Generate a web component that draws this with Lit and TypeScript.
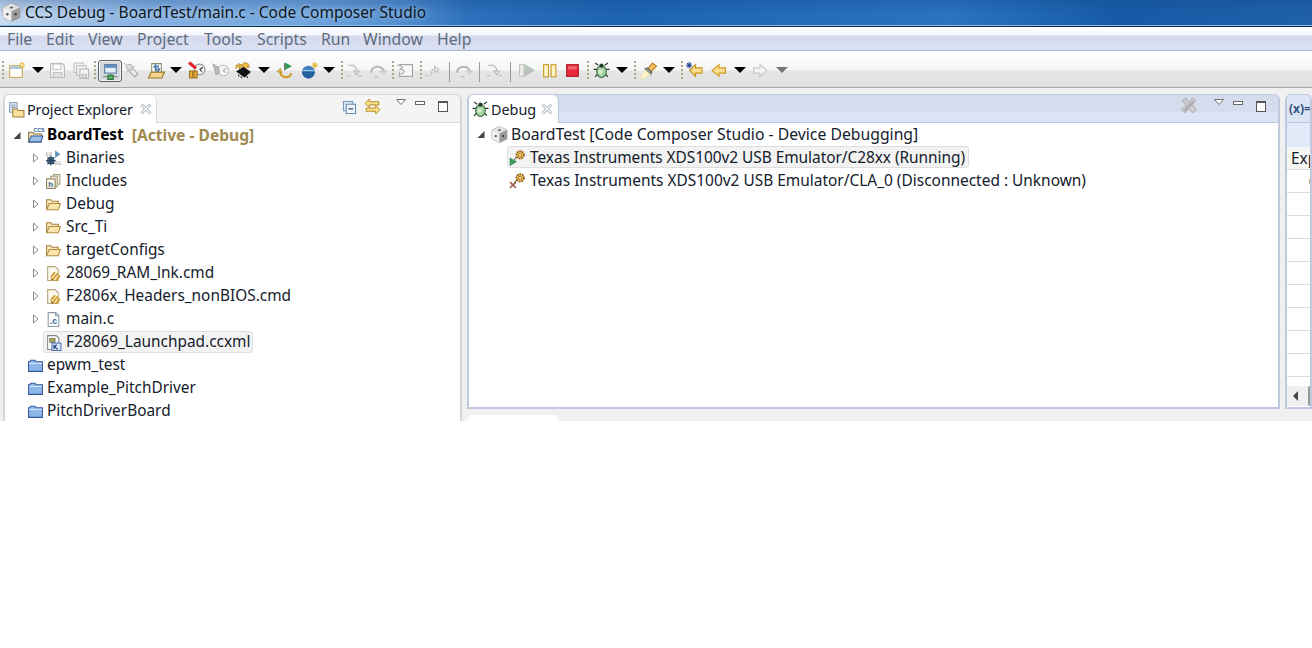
import { LitElement, html, css, svg } from "lit";
import { customElement } from "lit/decorators.js";

const S = (c: any, size = 17) => html`<svg width=${size} height=${size} viewBox="0 0 16 16" fill="none">${c}</svg>`;

const cube = svg`<path d="M8 .5 15 3.800v8.400L8 15.500 1 12.200V3.800z" fill="#c9c9c9" stroke="#8a8a8a" stroke-width=".7"/><path d="M1 3.800 8 7l7-3.200L8 .5z" fill="#e4e4e4"/><path d="M8 7v8.500L1 12.200V3.800z" fill="#f0f0f0"/><path d="M8 7v8.500l7-3.300V3.800z" fill="#9c9c9c"/><circle cx="4.500" cy="9.500" r="1.100" fill="#555"/><circle cx="11.500" cy="9.500" r="1.100" fill="#444"/><ellipse cx="8" cy="3.800" rx="1.600" ry=".8" fill="#666"/>`;
const folder = svg`<path d="M1.500 13V3.500h4l1 1.500h6v2" fill="#f8e8bf" stroke="#a8803c"/><path d="M1.500 13 4 7h10.500l-2 6z" fill="#fbe6b0" stroke="#b58b3c"/>`;
const blueFolder = svg`<path d="M1.500 13.500V4.500h1l1-1.500h4l1 1.500h6v9z" fill="#8fb8ea" stroke="#33589e"/><path d="M2 6h12" stroke="#dbe8fa"/>`;
const ccsFolder = svg`<path d="M1.500 14V5h4l1 1.500h7V14z" fill="#f3e3b8" stroke="#8a7240"/><path d="M1.500 14 4 8.500h11l-2 5.500z" fill="#9dc0ea" stroke="#2f5fa3"/><text x="6" y="4.800" font-size="5" font-family="Liberation Sans" font-weight="700" fill="#2f5fa3">CCS</text>`;
const linkedFile = svg`<path d="M2.500 1.500h7l3 3v10h-10z" fill="#fbf8ee" stroke="#b9a878"/><path d="M9.500 7 5.500 11.500M12 8 7 14M14 10l-4 5" stroke="#d09a24" stroke-width="1.700"/><path d="M5.500 12.500l2 2" stroke="#8a6412"/>`;
const cfile = svg`<path d="M3 1.500h7l3 3v10H3z" fill="#fff" stroke="#8e9aa8"/><path d="M10 1.500v3h3" stroke="#8e9aa8"/><text x="4.500" y="12" font-size="8" font-family="Liberation Sans" font-weight="700" fill="#2f5f9f">.c</text>`;
const ccxml = svg`<path d="M2.500 1.500h8l2.500 2.500v10.500H2.500z" fill="#fff" stroke="#7d8794"/><rect x="4.500" y="4" width="5" height="4" fill="#a8a060" stroke="#6d6840" stroke-width=".6"/><rect x="6.500" y="8.500" width="8.500" height="7" fill="#d7e6f7" stroke="#33589e" stroke-width=".8"/><path d="M8.500 10v4M11 10l-2 2 3 2.500" stroke="#1a3f80" stroke-width="1.100"/>`;
const binaries = svg`<text x="0" y="6" font-size="5.500" font-family="Liberation Mono" fill="#9a9a9a">10</text><text x="9" y="14" font-size="5.500" font-family="Liberation Mono" fill="#9a9a9a">01</text><path d="M9.500.5l5 3.500-5 3.500z" fill="#5d93bd"/><circle cx="5.500" cy="10" r="3" fill="#7ea2c0" stroke="#24445f"/><path d="M5.500 5.500v9M1 10h9M2.300 6.800l6.400 6.400M8.700 6.800l-6.400 6.400" stroke="#24445f"/>`;
const includes = svg`<rect x="8" y="1.500" width="6" height="9" fill="#f6f0df" stroke="#a39a80"/><rect x="5.500" y="3" width="6" height="10" fill="#f6f0df" stroke="#a39a80"/><rect x="1.500" y="5.500" width="8" height="9" fill="#fff8e6" stroke="#8a7e5e"/><text x="3" y="13" font-size="7.500" font-family="Liberation Sans" font-weight="700" fill="#2f5f9f">h</text>`;
const bug = svg`<path d="M5 3 2 1M4 7H.5M4.500 11 2 14M11 3l3-2M12 7h3.500M11.500 11l2.500 3" stroke="#26402c" stroke-width="1.100"/><ellipse cx="8" cy="9" rx="4.500" ry="5.500" fill="#a9d3a0" stroke="#2f6640"/><circle cx="7" cy="9" r="2" fill="#d9eccf"/><circle cx="8" cy="3.500" r="2" fill="#20402a"/>`;
const gear = svg`<circle cx="10.500" cy="5.500" r="3.600" fill="#eab84a" stroke="#8a5a14" stroke-width="1.400" stroke-dasharray="1.800 .8"/><circle cx="10.500" cy="5.500" r="1.500" fill="#fff1c0" stroke="#8a5a14" stroke-width=".7"/>`;
const running = svg`${gear}<path d="M7.500 7.500 5 10" stroke="#6a5a3a"/><path d="M1 8.500 7 12 1 15.500z" fill="#3f9d5a" stroke="#2c7a42" stroke-width=".6"/>`;
const disco = svg`${gear}<path d="M7.500 7.500 5 10" stroke="#6a5a3a"/><path d="M1 9.500l5.500 5.500M6.500 9.500 1 15" stroke="#a0604c" stroke-width="1.500"/>`;
const newWiz = svg`<rect x="1.500" y="3.500" width="12" height="11" fill="#fff" stroke="#c7a94f"/><rect x="2" y="4" width="11" height="2.500" fill="#a8c4e4"/><path d="M13 0v6M10 3h6M11 1l4 4M15 1l-4 4" stroke="#e8b93a"/><circle cx="13" cy="3" r="1" fill="#fff"/>`;
const save = svg`<path d="M1.500 1.500h11l2 2v11h-13z" fill="#f4f4f4" stroke="#b5b5b5"/><rect x="4" y="2" width="7" height="5" fill="#fff" stroke="#c8c8c8"/><rect x="4" y="10" width="8" height="4.500" fill="#e2e2e2" stroke="#bdbdbd"/>`;
const saveAll = svg`<rect x="1" y="1" width="9" height="9" fill="#f4f4f4" stroke="#c2c2c2"/><rect x="3.500" y="3.500" width="9" height="9" fill="#f4f4f4" stroke="#bbb"/><path d="M6.500 6.500h8v9h-8z" fill="#f4f4f4" stroke="#b2b2b2"/><rect x="8.500" y="11.500" width="4" height="3.500" fill="#ddd" stroke="#bbb"/>`;
const connect = svg`<rect x="2.500" y="1.500" width="11" height="8" fill="#e6eef8" stroke="#5876a0"/><rect x="3" y="2" width="10" height="2.500" fill="#5a88c0"/><path d="M8 10v2M1 13h14" stroke="#6a8a70"/><rect x="5.500" y="11.500" width="5" height="4" fill="#57b06a" stroke="#2a6a3a"/>`;
const plug = svg`<path d="M9 6l5 5-3 3-5-5z" fill="#e8e8e8" stroke="#aaa"/><circle cx="6" cy="5" r="2.800" fill="#ddd" stroke="#aaa" stroke-dasharray="1.500 .7"/><path d="M1 1l2 2M11 4l-2 1M3 10l2-2" stroke="#bbb"/>`;
const load = svg`<path d="M3.500 11V1.500h9V11" fill="#fff" stroke="#8b8b70"/><path d="M6.800 9V5H5.300l1.700-3 1.500 3H7.800z" fill="#3f7cc0" stroke="#2a5a9a" stroke-width=".5"/><path d="M9.500 2.500v4H11l-1.800 3-1.400-3" stroke="#2a5a9a"/><path d="M.5 15 3 9.500h12.500L13 15z" fill="#f2d48f" stroke="#9a7426"/>`;
const pinClock = svg`<circle cx="11" cy="7" r="5" fill="#f6f6f6" stroke="#8f8f8f"/><path d="M11 7l3-2M11 7l2 2" stroke="#333"/><rect x="1.500" y="8.500" width="3" height="6.500" fill="#efb13a" stroke="#9a6a10"/><rect x="5.500" y="8.500" width="3" height="6.500" fill="#efb13a" stroke="#9a6a10"/><path d="M1 .5 7.500 6" stroke="#e0202a" stroke-width="3"/>`;
const greyClock = svg`<circle cx="10.500" cy="8" r="5" fill="#f5f5f5" stroke="#bcbcbc"/><path d="M10.500 8l3-2M10.500 8l2 2" stroke="#aaa"/><path d="M1 2l5 3 1 5-3 2z" fill="#bdbdbd" stroke="#aaa"/>`;
const chip = svg`<path d="M1 9 8 4.500l7 5-6 5z" fill="#111"/><path d="M3 12l1 1.500M5.500 13.500l1 1.500M11 13.500l1 1.500" stroke="#222"/><path d="M1 6.500V3h3l-.5-1.500L7.500 3.500 4 6.500 4.300 4.800H2.500" fill="#f0c040" stroke="#a8781c" stroke-width=".7"/><path d="M6.500 3 8.500.5l4.500 1.500-1 1.500 2 1-4 1.200z" fill="#f0c040" stroke="#a8781c" stroke-width=".7"/>`;
const greenRet = svg`<path d="M8 1v7" stroke="#777"/><path d="M8.500.5 15 4 8.500 7.500z" fill="#2f9a5a"/><path d="M4 9a5 5 0 0 0 5 5.200c3 0 5-1.500 5-3.700" stroke="#d49a24" stroke-width="2"/><path d="M1 9l3-3 1.500 4z" fill="#eab84a" stroke="#a8781c" stroke-width=".6"/>`;
const blueBall = svg`<circle cx="7" cy="9.500" r="6" fill="#3f7fc0"/><path d="M1 9.500h12a6 6 0 0 1-12 0z" fill="#25609f"/><path d="M1.500 8h11" stroke="#a8c8e8"/><path d="M13 0v6M10 3h6M11 1l4 4M15 1l-4 4" stroke="#e8b93a"/>`;
const stepOver = svg`<path d="M2 3h5l3 3v3M7.500 8.500 10 12l2.500-3.500z" stroke="#b5b5b5" fill="#efefef"/><path d="M1 13h3M12 13h3" stroke="#b5b5b5"/>`;
const stepRet = svg`<path d="M2 10A6 5 0 0 1 14 9" stroke="#b8b8b8" stroke-width="2" fill="none"/><path d="M10.500 8.500h6L13.500 12z" fill="#ddd" stroke="#b8b8b8" stroke-width=".6"/><path d="M5 14h4" stroke="#b8b8b8"/>`;
const terminalI = svg`<rect x="3.500" y="2.500" width="12" height="11" fill="#f8f8f8" stroke="#9c9c9c"/><path d="M1 3h3l2 2-2 2h2l2 2-2 2H4" stroke="#a8a8a8" fill="#efefef"/>`;
const stepInto = svg`<path d="M1 13h3M6 13l2-6h3l3 3" stroke="#c0c0c0" fill="none"/><path d="M10 4l4 3-4 3z" fill="#e8e8e8" stroke="#c0c0c0"/>`;
const resume = svg`<rect x="1.500" y="2.500" width="4" height="11" fill="#eee" stroke="#c0c0c0"/><path d="M6.500 2.500 15 8l-8.500 5.500z" fill="#b8c4b8" stroke="#bcc4bc"/>`;
const pause = svg`<rect x="2.500" y="2.500" width="4.500" height="11.500" fill="#fdf3c8" stroke="#c8981c"/><rect x="9.500" y="2.500" width="4.500" height="11.500" fill="#fdf3c8" stroke="#c8981c"/>`;
const stop = svg`<rect x="2.500" y="2.500" width="11" height="11" fill="#ea2a3a" stroke="#a81824"/><rect x="4" y="4" width="8" height="3" fill="#f26a70"/>`;
const torch = svg`<path d="M7 7 11.800 1l3.700 3L10 9.500z" fill="#f5c060" stroke="#b8801e"/><path d="M4.500 6.500 7 5.500l4 4-1 2.500z" fill="#9a9a9a" stroke="#666"/><path d="M4.500 7 .5 14.500 2 16l8-4z" fill="#fff4c8" stroke="#e8d8a0" stroke-width=".5"/>`;
const backStar = svg`<path d="M9 2.500 3.500 8 9 13.500v-3h6v-5H9z" fill="#fbdf90" stroke="#c8921e" stroke-width="1.100"/><path d="M3 0v6M0 3h6M1 1l4 4M5 1 1 5" stroke="#2f4f90"/>`;
const back = svg`<path d="M8.500 2.500 2 8l6.500 5.500v-3h6v-5h-6z" fill="#fbdf90" stroke="#d09a24" stroke-width="1.100"/>`;
const forward = svg`<path d="M7.500 2.500 14 8l-6.500 5.500v-3h-6v-5h6z" fill="#f4f4f4" stroke="#c8c8c8" stroke-width="1.100"/>`;
const collapse = svg`<rect x="1.500" y="1.500" width="10" height="10" fill="#dce7f5" stroke="#6b90b8"/><rect x="4.500" y="4.500" width="10" height="10" fill="#eef4fb" stroke="#5a80aa"/><path d="M7 9.500h5" stroke="#2a4a70" stroke-width="1.300"/>`;
const linkSync = svg`<path d="M1 5l4-4v2.500h9V6.500H5V9z" fill="#fbe08c" stroke="#b88a1c" stroke-width=".9"/><path d="M15 11l-4-4v2.500H2v3h9V15z" fill="#fbe08c" stroke="#b88a1c" stroke-width=".9"/>`;
const removeAll = svg`<path d="M2 3l3-2 3 4 3-4 3 2-3.500 4 4 4-3 3-3.500-4-3.500 4-3-3 4-4z" fill="#cfcfcf" stroke="#b5b5b5"/><path d="M4 12 12 4" stroke="#aaa" stroke-width="2"/>`;
const closeX = svg`<path d="M2.500 4 4 2.500 8 6.300 12 2.500 13.500 4 9.700 8l3.800 4-1.500 1.500L8 9.700 4 13.500 2.500 12 6.300 8z" fill="#fff" stroke="#7c8a92" stroke-width=".9"/>`;
const peFiles = svg`<rect x="1.500" y="1.500" width="7" height="9" fill="#dfe8f2" stroke="#8aa0b8"/><path d="M3 4h4M3 6h4" stroke="#7f95ad"/><path d="M4.500 15V7.500h4l1 1.500h5.500v6z" fill="#f8e1a0" stroke="#a8803c"/>`;
const viewMenu = svg`<path d="M.5.5h9L5 5.500z" fill="#fff" stroke="#666" stroke-width=".9"/>`;
const twClosed = svg`<path d="M1.500 1 6 5 1.500 9z" fill="#fff" stroke="#8c8c8c"/>`;
const twOpen = svg`<path d="M7.500 1v7h-7z" fill="#444"/>`;

const gap = (c: number) => ({ c, k: "grip" });
type Tool = { c: number; k: string; i?: any };
const tools: Tool[] = [
  gap(2),
  { c: 17, k: "ic", i: newWiz }, { c: 38, k: "dd" },
  { c: 58, k: "ic", i: save }, { c: 82, k: "ic", i: saveAll }, gap(94),
  { c: 110, k: "pressed", i: connect }, { c: 132, k: "ic", i: plug }, { c: 157, k: "ic", i: load }, { c: 176, k: "dd" },
  { c: 197, k: "ic", i: pinClock }, { c: 221, k: "ic", i: greyClock }, { c: 244, k: "ic", i: chip }, { c: 264, k: "dd" },
  { c: 285, k: "ic", i: greenRet }, { c: 310, k: "ic", i: blueBall }, { c: 329, k: "dd" }, gap(341),
  { c: 355, k: "ic", i: stepOver }, { c: 378, k: "ic", i: stepRet }, gap(392),
  { c: 405, k: "ic", i: terminalI }, gap(420),
  { c: 433, k: "ic", i: stepInto }, { c: 449, k: "sep" },
  { c: 464, k: "ic", i: stepRet }, { c: 479, k: "sep" },
  { c: 495, k: "ic", i: stepOver }, { c: 510, k: "sep" },
  { c: 527, k: "ic", i: resume }, { c: 550, k: "ic", i: pause }, { c: 573, k: "ic", i: stop }, gap(587),
  { c: 602, k: "ic", i: bug }, { c: 622, k: "dd" }, gap(634),
  { c: 649, k: "ic", i: torch }, { c: 669, k: "dd" }, gap(681),
  { c: 695, k: "ic", i: backStar }, { c: 719, k: "ic", i: back }, { c: 740, k: "dd" },
  { c: 761, k: "ic", i: forward }, { c: 782, k: "ddoff" },
];

const menus = [["File", 39], ["Edit", 42], ["View", 49], ["Project", 67], ["Tools", 53], ["Scripts", 64], ["Run", 42], ["Window", 74], ["Help", 40]] as const;

type Row = { t: string; i: any; tw?: "open" | "closed" | "none"; sel?: boolean };
const rows0: Row = { t: "BoardTest", i: ccsFolder, tw: "open" };
const rows1: Row[] = [
  { t: "Binaries", i: binaries, tw: "closed" },
  { t: "Includes", i: includes, tw: "closed" },
  { t: "Debug", i: folder, tw: "closed" },
  { t: "Src_Ti", i: folder, tw: "closed" },
  { t: "targetConfigs", i: folder, tw: "closed" },
  { t: "28069_RAM_lnk.cmd", i: linkedFile, tw: "closed" },
  { t: "F2806x_Headers_nonBIOS.cmd", i: linkedFile, tw: "closed" },
  { t: "main.c", i: cfile, tw: "closed" },
  { t: "F28069_Launchpad.ccxml", i: ccxml, tw: "none", sel: true },
];
const rows2 = ["epwm_test", "Example_PitchDriver", "PitchDriverBoard"];

@customElement("app-root")
export class AppRoot extends LitElement {
  static styles = css`
    :host { display: block; width: 1312px; height: 648px; background: #fff; overflow: hidden;
      font-family: "Noto Sans", "Open Sans", sans-serif; font-size: 15.400px; color: #14202c; }
    svg { display: block; flex: none; overflow: visible; }
    .title { height: 27px; box-sizing: border-box; display: flex; align-items: center; gap: 4px; padding: 0 0 2px 2px;
      border-bottom: 1px solid #10294e; box-shadow: inset 0 -1px 0 #8dbde8;
      background:
        linear-gradient(180deg, rgba(20,70,140,.28), rgba(255,255,255,0) 55%),
        linear-gradient(90deg, #ccdcee 0, #a8c6e8 60px, #84b0e2 150px, #72a5dc 300px, #5590d0 400px, #2c6fba 470px, #1d63b0 620px, #2a73c0 950px, #165aa5 1120px, #2060ab 1312px); }
    .title span { font-size: 15.500px; color: #0c1622; text-shadow: 0 0 5px rgba(255,255,255,.55); }
    .menu { height: 24px; box-sizing: border-box; display: flex; align-items: center; padding-left: 7px;
      border-bottom: 1px solid #afb5cf;
      background: linear-gradient(180deg, #fff 0, #f4f6fb 8px, #d4daed 9px, #dbe1f2 23px); }
    .menu span { color: #5f6c80; font-size: 15.800px; flex: none; }
    .tools { height: 37px; box-sizing: border-box; display: flex; padding-left: 2px;
      border-bottom: 1px solid #a8a8a8;
      background: linear-gradient(180deg, #fff 0, #f6f6f6 19px, #e6e6e6 20px, #e0e0e0 36px); }
    .slot { flex: none; position: relative; height: 36px; }
    .slot > * { position: absolute; }
    .ic { left: -9px; top: 11px; }
    .pressed { left: -12px; top: 9px; width: 22px; height: 20px; border: 1px solid #5c6268; border-radius: 3px;
      background: #d5d9de; box-shadow: inset 0 0 0 1px #f2f2f2; display: flex; align-items: center; justify-content: center; }
    .dd { left: -6px; top: 16px; border: 6px solid transparent; border-top: 6px solid #000; border-bottom: 0; }
    .ddoff { left: -6px; top: 16px; border: 6px solid transparent; border-top: 6px solid #777; border-bottom: 0; }
    .grip { left: 0; top: 10px; width: 2px; height: 20px;
      background: repeating-linear-gradient(180deg, #a8a890 0 2px, transparent 2px 4px); }
    .sep { left: 0; top: 11px; width: 1px; height: 20px; background: #9a9a9a; }
    .work { height: 333px; box-sizing: border-box; overflow: hidden; background: #f0f0f0; display: flex; gap: 5px; padding: 6px 0 0 3px; }
    .panel { box-sizing: border-box; border: 2px solid #c0c9dd; border-top-width: 1px; border-radius: 6px 6px 0 0;
      background: #fff; display: flex; flex-direction: column; overflow: hidden; }
    .panel > * { flex: none; }
    .left { width: 459px; height: 340px; flex: none; border-color: #d2d6de; }
    .mid { width: 813px; flex: none; display: flex; flex-direction: column; }
    .mid .panel { height: 315px; flex: none; }
    .stub { width: 91px; height: 20px; margin-top: 6px; background: #fff; border-radius: 5px 5px 0 0; }
    .right { flex: 1; min-width: 0; height: 315px; }
    .head { height: 27px; display: flex; position: relative; border-bottom: 1px solid #bcc7dc; }
    .left .head { background: #f4f4f4; border-bottom-color: #dcdcdc; }
    .act { background: linear-gradient(180deg, #d3dbed 0, #d5dcee 17px, #dce5f6 18px); }
    .right .act { background: #dce5f6; }
    .tab { background: #fff; height: 28px; box-sizing: border-box; flex: none; display: flex; align-items: center;
      border-right: 1px solid #bcc7dc; border-radius: 0 6px 0 0; margin-bottom: -1px; padding-left: 3px; white-space: nowrap; }
    .left .tab { border-right-color: #dcdcdc; width: 152px; }
    .mid .tab { width: 90px; }
    .tab b { font-weight: 400; font-size: 14.400px; margin-left: 2px; flex: none; }
    .left .tab b { letter-spacing: -.1px; }
    .tab i { display: block; flex: none; }
    .left .tab i { margin-left: 6px; }
    .mid .tab i { margin-left: 4px; }
    .hic { margin-left: auto; display: flex; position: relative; height: 27px; }
    .hslot { position: relative; height: 27px; flex: none; }
    .hslot > * { position: absolute; }
    .vm { left: -4px; top: 4px; }
    .mn { left: -5px; top: 6px; width: 8px; height: 2px; border: 1px solid #666; background: #fff; }
    .mx { left: -5px; top: 6px; width: 8px; height: 8px; border: 1px solid #555; border-top-width: 2px; background: #fff; }
    .r { height: 23px; box-sizing: border-box; padding-bottom: 1px; display: flex; align-items: center; white-space: nowrap; }
    .left .r { padding-bottom: 0; padding-top: 1px; }
    .tw { width: 12px; flex: none; display: flex; justify-content: center; }
    .s { display: flex; align-items: center; height: 22px; box-sizing: border-box; border: 1px solid transparent; border-radius: 3px; padding-bottom: 1px; }
    .s.on { background: #f3f3f3; border-color: #dedede; }
    .s svg { margin-top: 1px; }
    .lv0 { padding-left: 6px; }
    .lv0 .s { margin-left: 2px; padding-left: 1px; padding-right: 2px; gap: 3px; }
    .lv1 { padding-left: 24px; }
    .lv1 .s { margin-left: 2px; padding-left: 1px; padding-right: 2px; gap: 4px; }
    .bold { font-weight: 700; color: #000; }
    .deco { font-weight: 700; color: #a08a50; margin-left: 5px; font-size: 15.600px; }
    .d0 { padding-left: 6px; font-size: 15.750px; }
    .d0 .s { margin-left: 1px; gap: 3px; padding-left: 2px; padding-right: 2px; }
    .d1 { padding-left: 38px; font-size: 15.450px; }
    .d1 .s { padding-left: 1px; padding-right: 3px; gap: 4px; }
    .run { letter-spacing: -.05px; }
    .rsub { height: 24px; background: #e2e9f8; }
    .rhead { height: 23px; box-sizing: border-box; padding-left: 4px; background: #f6f6f2; border-bottom: 1px solid #dcdcdc; display: flex; align-items: center; }
    .rrow { height: 23px; box-sizing: border-box; border-bottom: 1px solid #dcdcdc; position: relative; }
    .rrow span { position: absolute; }
    .x { font-size: 11px; font-weight: 700; color: #34507a; white-space: nowrap; left: 22px; top: 3px; }
    .xhead { font-size: 12px; font-weight: 700; color: #34507a; margin-left: 2px; white-space: nowrap; align-self: center; }
    .v { align-self: center; margin-left: 2px; color: #14202c; }
    .eq { left: 23px; top: 10px; width: 5px; height: 2px; background: #3f8f50; }
    .sb { height: 20px; margin-top: 9px; background: #f0f0f0; display: flex; align-items: center; padding-left: 6px; }
    .sb::before { content: ""; border: 5px solid transparent; border-right: 5px solid #444; border-left: 0; }
    .th { margin-left: 10px; width: 12px; height: 18px; border: 1px solid #9a9a9a; background: #e8e8e8; border-radius: 2px; }
  `;

  private tw(k?: string) {
    if (k === "closed") return html`<svg width="7" height="10" viewBox="0 0 7 10">${twClosed}</svg>`;
    if (k === "open") return html`<svg width="8" height="9" viewBox="0 0 8 9">${twOpen}</svg>`;
    return "";
  }

  private row(r: Row, lv: string, label?: any) {
    return html`<div class="r ${lv}"><span class="tw">${this.tw(r.tw)}</span>
      <div class="s ${r.sel ? "on" : ""}">${S(r.i)}${label ?? html`<span>${r.t}</span>`}</div></div>`;
  }

  private winBtns() {
    return html`
      <div class="hslot" style="width:20px"><div class="vm"><svg width="10" height="6" viewBox="0 0 10 6">${viewMenu}</svg></div></div>
      <div class="hslot" style="width:23px"><div class="mn"></div></div>
      <div class="hslot" style="width:17px"><div class="mx"></div></div>`;
  }

  render() {
    return html`
      <div class="title">${S(cube, 19)}<span>CCS Debug - BoardTest/main.c - Code Composer Studio</span></div>
      <div class="menu">${menus.map(([m, w]) => html`<span style="width:${w}px">${m}</span>`)}</div>
      <div class="tools">
        ${tools.map((t, n) => {
          const w = n + 1 < tools.length ? tools[n + 1].c - t.c : 40;
          const inner =
            t.k === "ic" ? html`<div class="ic">${S(t.i)}</div>` :
            t.k === "pressed" ? html`<div class="pressed">${S(t.i)}</div>` :
            html`<div class=${t.k}></div>`;
          return html`<div class="slot" style="width:${w}px">${inner}</div>`;
        })}
      </div>
      <div class="work">
        <section class="panel left">
          <div class="head">
            <div class="tab">${S(peFiles)}<b>Project Explorer</b><i>${S(closeX, 14)}</i></div>
            <div class="hic">
              <div class="hslot" style="width:23px"><div style="left:-7px;top:5px">${S(collapse, 15)}</div></div>
              <div class="hslot" style="width:28px"><div style="left:-8px;top:3px">${S(linkSync)}</div></div>
              ${this.winBtns()}
            </div>
          </div>
          <div>
            ${this.row(rows0, "lv0", html`<span class="bold">BoardTest</span><span class="deco">[Active - Debug]</span>`)}
            ${rows1.map((r) => this.row(r, "lv1"))}
            ${rows2.map((t) => this.row({ t, i: blueFolder, tw: "none" }, "lv0"))}
          </div>
        </section>
        <div class="mid">
          <section class="panel">
            <div class="head act">
              <div class="tab">${S(bug)}<b>Debug</b><i>${S(closeX, 14)}</i></div>
              <div class="hic">
                <div class="hslot" style="width:29px"><div style="left:-9px;top:2px">${S(removeAll, 18)}</div></div>
                ${this.winBtns()}
              </div>
            </div>
            <div>
              ${this.row({ t: "BoardTest [Code Composer Studio - Device Debugging]", i: cube, tw: "open" }, "d0")}
              <div class="r d1"><div class="s on">${S(running)}<span class="run">Texas Instruments XDS100v2 USB Emulator/C28xx (Running)</span></div></div>
              <div class="r d1"><div class="s">${S(disco)}<span>Texas Instruments XDS100v2 USB Emulator/CLA_0 (Disconnected : Unknown)</span></div></div>
            </div>
          </section>
          <div class="stub"></div>
        </div>
        <section class="panel right">
          <div class="head act">
            <span class="xhead">(x)=</span><span class="v">Variables</span>
          </div>
          <div class="rsub"></div>
          <div class="rhead">Expression</div>
          <div class="rrow"><span class="x">(x)</span></div>
          <div class="rrow"><span class="eq"></span></div>
          ${[0, 1, 2, 3, 4, 5, 6].map(() => html`<div class="rrow"></div>`)}
          <div class="sb"><div class="th"></div></div>
        </section>
      </div>
    `;
  }
}
